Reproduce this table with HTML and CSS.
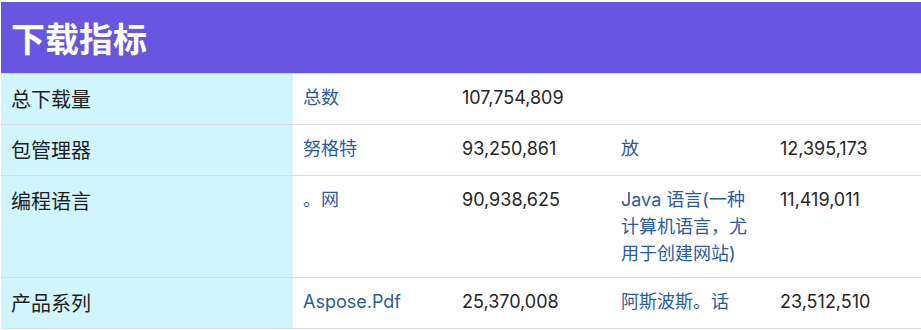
FILE: index.html
```html
<!DOCTYPE html>
<html lang="zh-CN">
<head>
<meta charset="utf-8">
<title>下载指标</title>
<link rel="stylesheet" href="styles.css">
</head>
<body>
<table class="metrics">
  <colgroup>
    <col class="c-label">
    <col class="c-mid">
    <col class="c-mid">
    <col class="c-mid">
    <col class="c-last">
  </colgroup>
  <thead>
    <tr>
      <th class="title" colspan="5">下载指标</th>
    </tr>
  </thead>
  <tbody>
    <tr>
      <th class="label">总下载量</th>
      <td><a class="link" href="#">总数</a></td>
      <td class="num">107,754,809</td>
      <td></td>
      <td></td>
    </tr>
    <tr>
      <th class="label">包管理器</th>
      <td><a class="link" href="#">努格特</a></td>
      <td class="num">93,250,861</td>
      <td><a class="link" href="#">放</a></td>
      <td class="num">12,395,173</td>
    </tr>
    <tr>
      <th class="label">编程语言</th>
      <td><a class="link" href="#">。网</a></td>
      <td class="num">90,938,625</td>
      <td><a class="link" href="#">Java 语言(一种计算机语言，尤用于创建网站)</a></td>
      <td class="num">11,419,011</td>
    </tr>
    <tr>
      <th class="label">产品系列</th>
      <td><a class="link" href="#">Aspose.Pdf</a></td>
      <td class="num">25,370,008</td>
      <td><a class="link" href="#">阿斯波斯。话</a></td>
      <td class="num">23,512,510</td>
    </tr>
  </tbody>
</table>
</body>
</html>
```
FILE: styles.css
```css
html, body {
  margin: 0;
  padding: 0;
  background: #ffffff;
}

body {
  padding: 2px 0 0 1px;
  font-family: "Inter", "Noto Sans CJK SC", sans-serif;
  font-size: 18px;
  line-height: 27px;
  color: #222222;
}

.metrics {
  width: 920px;
  border-collapse: collapse;
  table-layout: fixed;
}

.c-label { width: 292px; }
.c-mid { width: 159px; }
.c-last { width: 151px; }

.metrics th,
.metrics td {
  padding: 10px;
  text-align: left;
  vertical-align: top;
  border-bottom: 1px solid #dcdcdc;
}

.title {
  background: #6856e0;
  color: #ffffff;
  font-family: "Noto Sans CJK SC", sans-serif;
  font-size: 34px;
  font-weight: 700;
  line-height: 51px;
  height: 51px;
}

.label {
  background: #d0f5fc;
  font-family: "Noto Sans CJK SC", sans-serif;
  font-weight: 400;
  font-size: 20px;
  line-height: 30px;
  color: #1e1e1e;
}

.link {
  color: #2c5aa0;
  text-decoration: none;
}

.num {
  color: #262626;
}
```
